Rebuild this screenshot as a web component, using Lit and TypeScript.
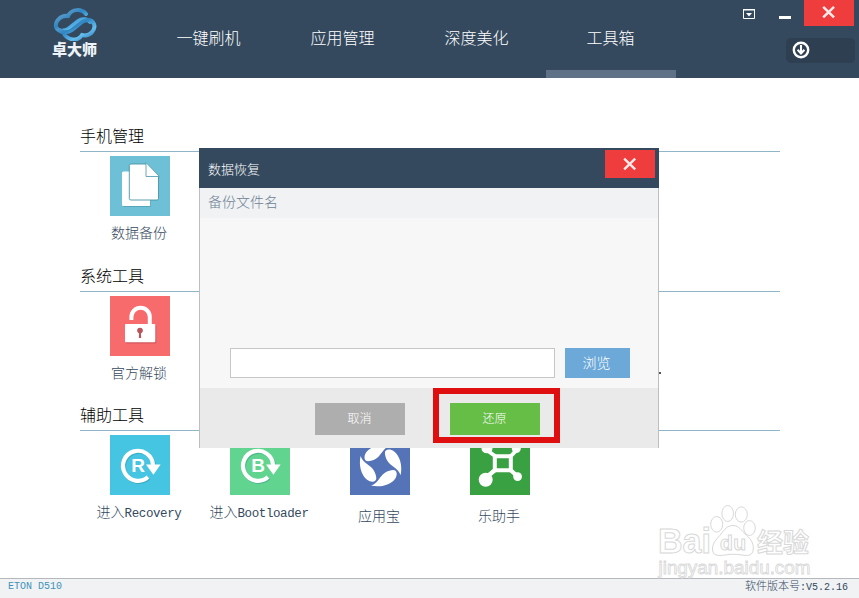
import { LitElement, html, svg, css, nothing } from "lit";
import { customElement, property, state } from "lit/decorators.js";
import { classMap } from "lit/directives/class-map.js";

type IconName = "backup" | "unlock" | "recovery" | "bootloader" | "yyb" | "helper";

interface Tool {
  icon: IconName;
  cjk: string;
  latin?: string;
  low?: boolean;
}

interface Section {
  title: string;
  tools: Tool[];
}

const SECTIONS: Section[] = [
  { title: "手机管理", tools: [{ icon: "backup", cjk: "数据备份" }] },
  { title: "系统工具", tools: [{ icon: "unlock", cjk: "官方解锁" }] },
  {
    title: "辅助工具",
    tools: [
      { icon: "recovery", cjk: "进入", latin: "Recovery" },
      { icon: "bootloader", cjk: "进入", latin: "Bootloader" },
      { icon: "yyb", cjk: "应用宝", low: true },
      { icon: "helper", cjk: "乐助手", low: true },
    ],
  },
];

const rotateArrow = (letter: string) => svg`
  <path d="M38 42A15 15 0 1 1 43 30" fill="none" stroke="#2a7f8a" stroke-opacity=".35" stroke-width="4.4" transform="translate(.8 .9)"/>
  <path d="M38 42A15 15 0 1 1 43 30" fill="none" stroke="#fff" stroke-width="4.2"/>
  <path d="M36 29.6H50.6L43.4 39.8Z" fill="#fff"/>
  <text x="28" y="36.8" text-anchor="middle" font-family="Liberation Sans, sans-serif"
    font-weight="700" font-size="19" fill="#fff">${letter}</text>`;

const PETAL = "M10.6 21C8.6 30 11 40 17 44.8C21.5 48 26.5 47 26.3 43C26 39 24.5 36 22 33C17.5 28.5 13 27.5 10.6 21Z";

const ICONS: Record<IconName, { bg: string; art: unknown }> = {
  backup: {
    bg: "#6dc0d5",
    art: svg`
      <path d="M14.3 16.3H40.5V51H14.3Q13 51 13 49.7V17.6Z" fill="#4a93a5" fill-opacity=".6"/>
      <path d="M13.5 15.5H40V50H13.5Q12 50 12 48.5V17Q12 15.5 13.5 15.5Z" fill="#fff"/>
      <path d="M21 8H35.5L48.5 21V42.5Q48.5 44 47 44H21Q19.3 44 19.3 42.5V9.5Q19.3 8 21 8Z" fill="#fff" stroke="#4a93a5" stroke-width=".9"/>
      <path d="M36 6.5V20.5H49.5Z" fill="#fff" stroke="#5aa0b1" stroke-width=".9"/>`,
  },
  unlock: {
    bg: "#f86b6d",
    art: svg`
      <rect x="16" y="29.2" width="30.3" height="18.3" rx="1" fill="#b54a50" fill-opacity=".6"/>
      <path d="M21.4 24V21A9.2 9.2 0 0 1 39.8 21V29" fill="none" stroke="#fff" stroke-width="4"/>
      <rect x="15" y="28" width="30.3" height="18.3" rx="1" fill="#fff"/>
      <circle cx="30" cy="34.6" r="2.8" fill="#b8545a"/>
      <path d="M29.2 35H30.8L31.2 42H28.8Z" fill="#b8545a"/>`,
  },
  recovery: { bg: "#45c5e2", art: rotateArrow("R") },
  bootloader: { bg: "#61d590", art: rotateArrow("B") },
  yyb: {
    bg: "#5573b7",
    art: svg`${[0, 90, 180, 270].map(
      (a) => svg`<path d=${PETAL} transform="rotate(${a} 30.6 30.6)" fill="#fff"/>`
    )}`,
  },
  helper: {
    bg: "#3aa143",
    art: svg`
      <g fill="none" stroke="#fff" stroke-linecap="round">
        <rect x="24.8" y="21.3" width="16" height="14" rx="1" stroke-width="4"/>
        <path d="M25 21L16 14.5M41 21L47 14.5" stroke-width="4"/>
        <path d="M24.5 35.5L19 40M41 35.5L46 40" stroke-width="4.2"/>
      </g>
      <g fill="#fff">
        <circle cx="15.7" cy="44.8" r="7"/><circle cx="47.6" cy="41.6" r="4.4"/>
        <ellipse cx="17" cy="13.8" rx="5.5" ry="4.5"/><ellipse cx="46.3" cy="13.8" rx="4.5" ry="4"/>
      </g>`,
  },
};

@customElement("tool-tile")
class ToolTile extends LitElement {
  @property({ attribute: false }) tool!: Tool;

  static styles = css`
    :host { display: flex; flex-direction: column; align-items: center; width: 120px; }
    .icon { display: block; width: 60px; height: 60px; }
    .label {
      margin: 6px 2px 0 0; font-size: 14px; line-height: 20px; height: 20px;
      color: #34495e; white-space: nowrap; display: flex; align-items: baseline;
    }
    .low { margin-top: 10px; }
    .latin { font-family: "Liberation Mono", monospace; font-size: 12.5px; letter-spacing: -0.4px; }
  `;

  render() {
    const { icon, cjk, latin, low } = this.tool;
    return html`
      <svg class="icon" viewBox="0 0 60 60">
        <rect width="60" height="60" fill=${ICONS[icon].bg} />
        ${ICONS[icon].art}
      </svg>
      <div class=${classMap({ label: true, low: !!low })}>
        <span>${cjk}</span>${latin ? html`<span class="latin">${latin}</span>` : nothing}
      </div>`;
  }
}

@customElement("app-header")
class AppHeader extends LitElement {
  @state() private active = 3;
  private tabs = ["一键刷机", "应用管理", "深度美化", "工具箱"];

  static styles = css`
    :host { display: flex; height: 78px; background: #34495e; color: #fff; justify-content: space-between; }
    .brand { width: 144px; display: flex; flex-direction: column; align-items: center; padding: 8px 0 0 6px; box-sizing: border-box; }
    .mark { display: block; width: 44px; height: 33px; }
    .name { font-size: 15px; font-weight: 900; line-height: 17px; color: #eef3f8; margin: -1px 1px 0 0; }
    .tabs { display: flex; gap: 4px; }
    .tab {
      width: 130px; height: 78px; box-sizing: border-box; text-align: center; font-size: 16px;
      line-height: 24px; padding: 25px 1px 0 0; border-bottom: 8px solid transparent;
    }
    .active { border-bottom-color: #5f7186; }
    .left { display: flex; }
    .right { display: flex; flex-direction: column; align-items: flex-end; width: 120px; }
    .window { display: flex; height: 26px; padding-right: 5px; }
    .window svg { display: block; }
    .download {
      width: 69px; height: 25px; margin: 12px 4px 0 0; border-radius: 5px; background: #2d3f50;
      display: flex; align-items: center; padding: 0 0 2px 6px; box-sizing: border-box;
    }
  `;

  render() {
    return html`
      <div class="left">
        <div class="brand">
          <svg class="mark" viewBox="0 0 44 33">
            <defs>
              <linearGradient id="g" x1="0" y1="0" x2="1" y2="1">
                <stop offset="0" stop-color="#7fa9c9" /><stop offset=".4" stop-color="#2f86c4" />
                <stop offset=".7" stop-color="#63bdee" /><stop offset="1" stop-color="#2d77ad" />
              </linearGradient>
            </defs>
            <g fill="none" stroke="url(#g)" stroke-linecap="round">
              <path stroke-width="4" d="M33 6C29 1 19 0 15 8C8 7 2 13 3 19C5 24 11 23 15 21L25 13C29 10 35 11 37 14" />
              <path stroke-width="4" d="M11 26C15 32 25 34 29 27C37 29 43 22 41 16C39 11 33 11 29 14L19 22C15 25 9 25 6 22" />
            </g>
          </svg>
          <div class="name">卓大师</div>
        </div>
        <div class="tabs">
          ${this.tabs.map(
            (t, i) => html`<div class=${classMap({ tab: true, active: i === this.active })}
              @click=${() => (this.active = i)}>${t}</div>`
          )}
        </div>
      </div>
      <div class="right">
        <div class="window">
          <svg width="111" height="26" viewBox="0 0 111 26">
            <path d="M.5 9.5H11.5V18.5H.5Z" fill="none" stroke="#fff" />
            <path d="M0 9H12V10.5H0ZM3 13H9L6 16.4Z" fill="#fff" />
            <rect x="36" y="16" width="12" height="3" fill="#fff" />
            <rect x="61" width="50" height="26" fill="#ef3c3c" />
            <path d="M80.2 6.8L91 17.4M91 6.8L80.2 17.4" stroke="#ffe9e9" stroke-width="2.5" />
          </svg>
        </div>
        <div class="download">
          <svg width="18" height="18" viewBox="0 0 18 18" fill="none" stroke="#fff">
            <circle cx="9" cy="9" r="7.2" stroke-width="2.4" />
            <path d="M9 4V12M5.6 8.8L9 12.4L12.4 8.8" stroke-width="2.1" />
          </svg>
        </div>
      </div>`;
  }
}

@customElement("restore-dialog")
class RestoreDialog extends LitElement {
  static styles = css`
    :host { display: flex; flex-direction: column; width: 460px; height: 300px; }
    .bar { height: 40px; background: #34495e; color: #fff; display: flex; justify-content: space-between; box-sizing: border-box; padding: 2px 4px 0 9px; }
    .title { font-size: 13px; line-height: 20px; margin-top: 9px; }
    .close { display: block; width: 50px; height: 28px; }
    .frame { flex: 1; display: flex; flex-direction: column; border: solid #bcbec0; border-width: 0 1px; background: #f7f7f7; }
    .column { height: 30px; background: #f0f2f4; color: #6f8193; font-size: 14px; line-height: 27px; padding-left: 8px; }
    .list { flex: 1; }
    .file { display: flex; gap: 10px; padding: 0 28px 10px 30px; }
    .path { flex: 1; height: 30px; box-sizing: border-box; border: 1px solid #c6c6c6; background: #fff; border-radius: 0; padding: 0 6px; min-width: 0; outline: 0; }
    .browse { width: 65px; height: 30px; box-sizing: border-box; padding-right: 2px; background: #6ca8d8; color: #fff; font-size: 14px; line-height: 28px; text-align: center; }
    .footer { height: 60px; background: #eaeaea; display: flex; gap: 28px; box-sizing: border-box; padding-left: 115px; }
    .cancel, .restore { width: 90px; height: 32px; box-sizing: border-box; padding-right: 1px; color: #fff; font-size: 12px; line-height: 30px; text-align: center; }
    .cancel { background: #aeaeae; margin-top: 15px; }
    .restore { background: #66be46; }
    .callout { width: 127px; height: 55px; box-sizing: border-box; border: 6px solid #df0f0f; padding: 9px 0 0 11px; }
  `;

  render() {
    return html`
      <div class="bar">
        <div class="title">数据恢复</div>
        <svg class="close" viewBox="0 0 50 28">
          <rect width="50" height="28" fill="#ef3c3c" />
          <path d="M19.2 8.7L30.2 19.3M30.2 8.7L19.2 19.3" stroke="#ffe9e9" stroke-width="2.4" />
        </svg>
      </div>
      <div class="frame">
        <div class="column">备份文件名</div>
        <div class="list"></div>
        <div class="file">
          <input class="path" />
          <div class="browse">浏览</div>
        </div>
        <div class="footer">
          <div class="cancel">取消</div>
          <div class="callout"><div class="restore">还原</div></div>
        </div>
      </div>`;
  }
}

@customElement("app-root")
class AppRoot extends LitElement {
  static styles = css`
    :host {
      display: flex; flex-direction: column; position: relative; width: 859px; height: 598px;
      overflow: hidden; background: #fff; font-family: "Noto Sans CJK SC", sans-serif; font-weight: 300;
    }
    .main { flex: 1; padding: 46px 79px 0 80px; }
    .section { height: 140px; }
    .section:nth-child(2) { height: 139px; }
    .heading { height: 27px; line-height: 22px; font-size: 16px; color: #000; border-bottom: 1px solid #8fb5c9; }
    .tools { display: flex; margin-top: 4px; }
    .status {
      height: 20px; box-sizing: border-box; border-top: 1px solid #b5b9bd; background: #f0f2f4;
      display: flex; justify-content: space-between; padding: 0 11px 0 8px;
      font-size: 11px; line-height: 13px; color: #34495e;
    }
    .mono { font-family: "Liberation Mono", monospace; font-size: 10px; }
    .device { color: #3f92bb; line-height: 15px; }
    .dialog { position: absolute; left: 199px; top: 148px; }
    .tick { position: absolute; left: 659px; top: 372px; width: 2px; height: 2px; background: #555; }
    .watermark { position: absolute; left: 655px; top: 500px; }
  `;

  render() {
    return html`
      <app-header></app-header>
      <div class="main">
        ${SECTIONS.map(
          (s) => html`<div class="section">
            <div class="heading">${s.title}</div>
            <div class="tools">${s.tools.map((t) => html`<tool-tile .tool=${t}></tool-tile>`)}</div>
          </div>`
        )}
      </div>
      <div class="status">
        <span class="mono device">ETON D510</span>
        <span>软件版本号<span class="mono">:V5.2.16</span></span>
      </div>
      <span class="tick"></span>
      <restore-dialog class="dialog"></restore-dialog>
      <svg class="watermark" width="160" height="82" viewBox="0 0 160 82" fill="#fff" stroke="#d8d8d8"
        font-family="Liberation Sans, sans-serif" font-weight="700">
        <text x="3" y="53" font-size="35" textLength="53" lengthAdjust="spacingAndGlyphs">Bai</text>
        <ellipse cx="61.7" cy="24.3" rx="6" ry="7.8" />
        <ellipse cx="72.7" cy="13.5" rx="5.8" ry="8" />
        <ellipse cx="86.3" cy="14.5" rx="6" ry="7.6" />
        <ellipse cx="94.5" cy="28" rx="5.8" ry="7.4" />
        <path d="M78 25.5C84 25.5 87 31 90 34C95 38 98.5 42 98.3 49C98 56 92 56 87 55C81 54 75 54 70 55C63 56 57.5 56 57.5 49C57.5 42 63 38 66 34C69 30 72 25.5 78 25.5Z" />
        <text x="65" y="50" font-size="21" textLength="26">du</text>
        <text x="102" y="51.5" font-size="26" font-family="Noto Sans CJK SC, sans-serif">经验</text>
        <text x="3.5" y="74" font-size="17.5" stroke-width=".8" font-weight="400" textLength="152" lengthAdjust="spacingAndGlyphs">jingyan.baidu.com</text>
      </svg>`;
  }
}
